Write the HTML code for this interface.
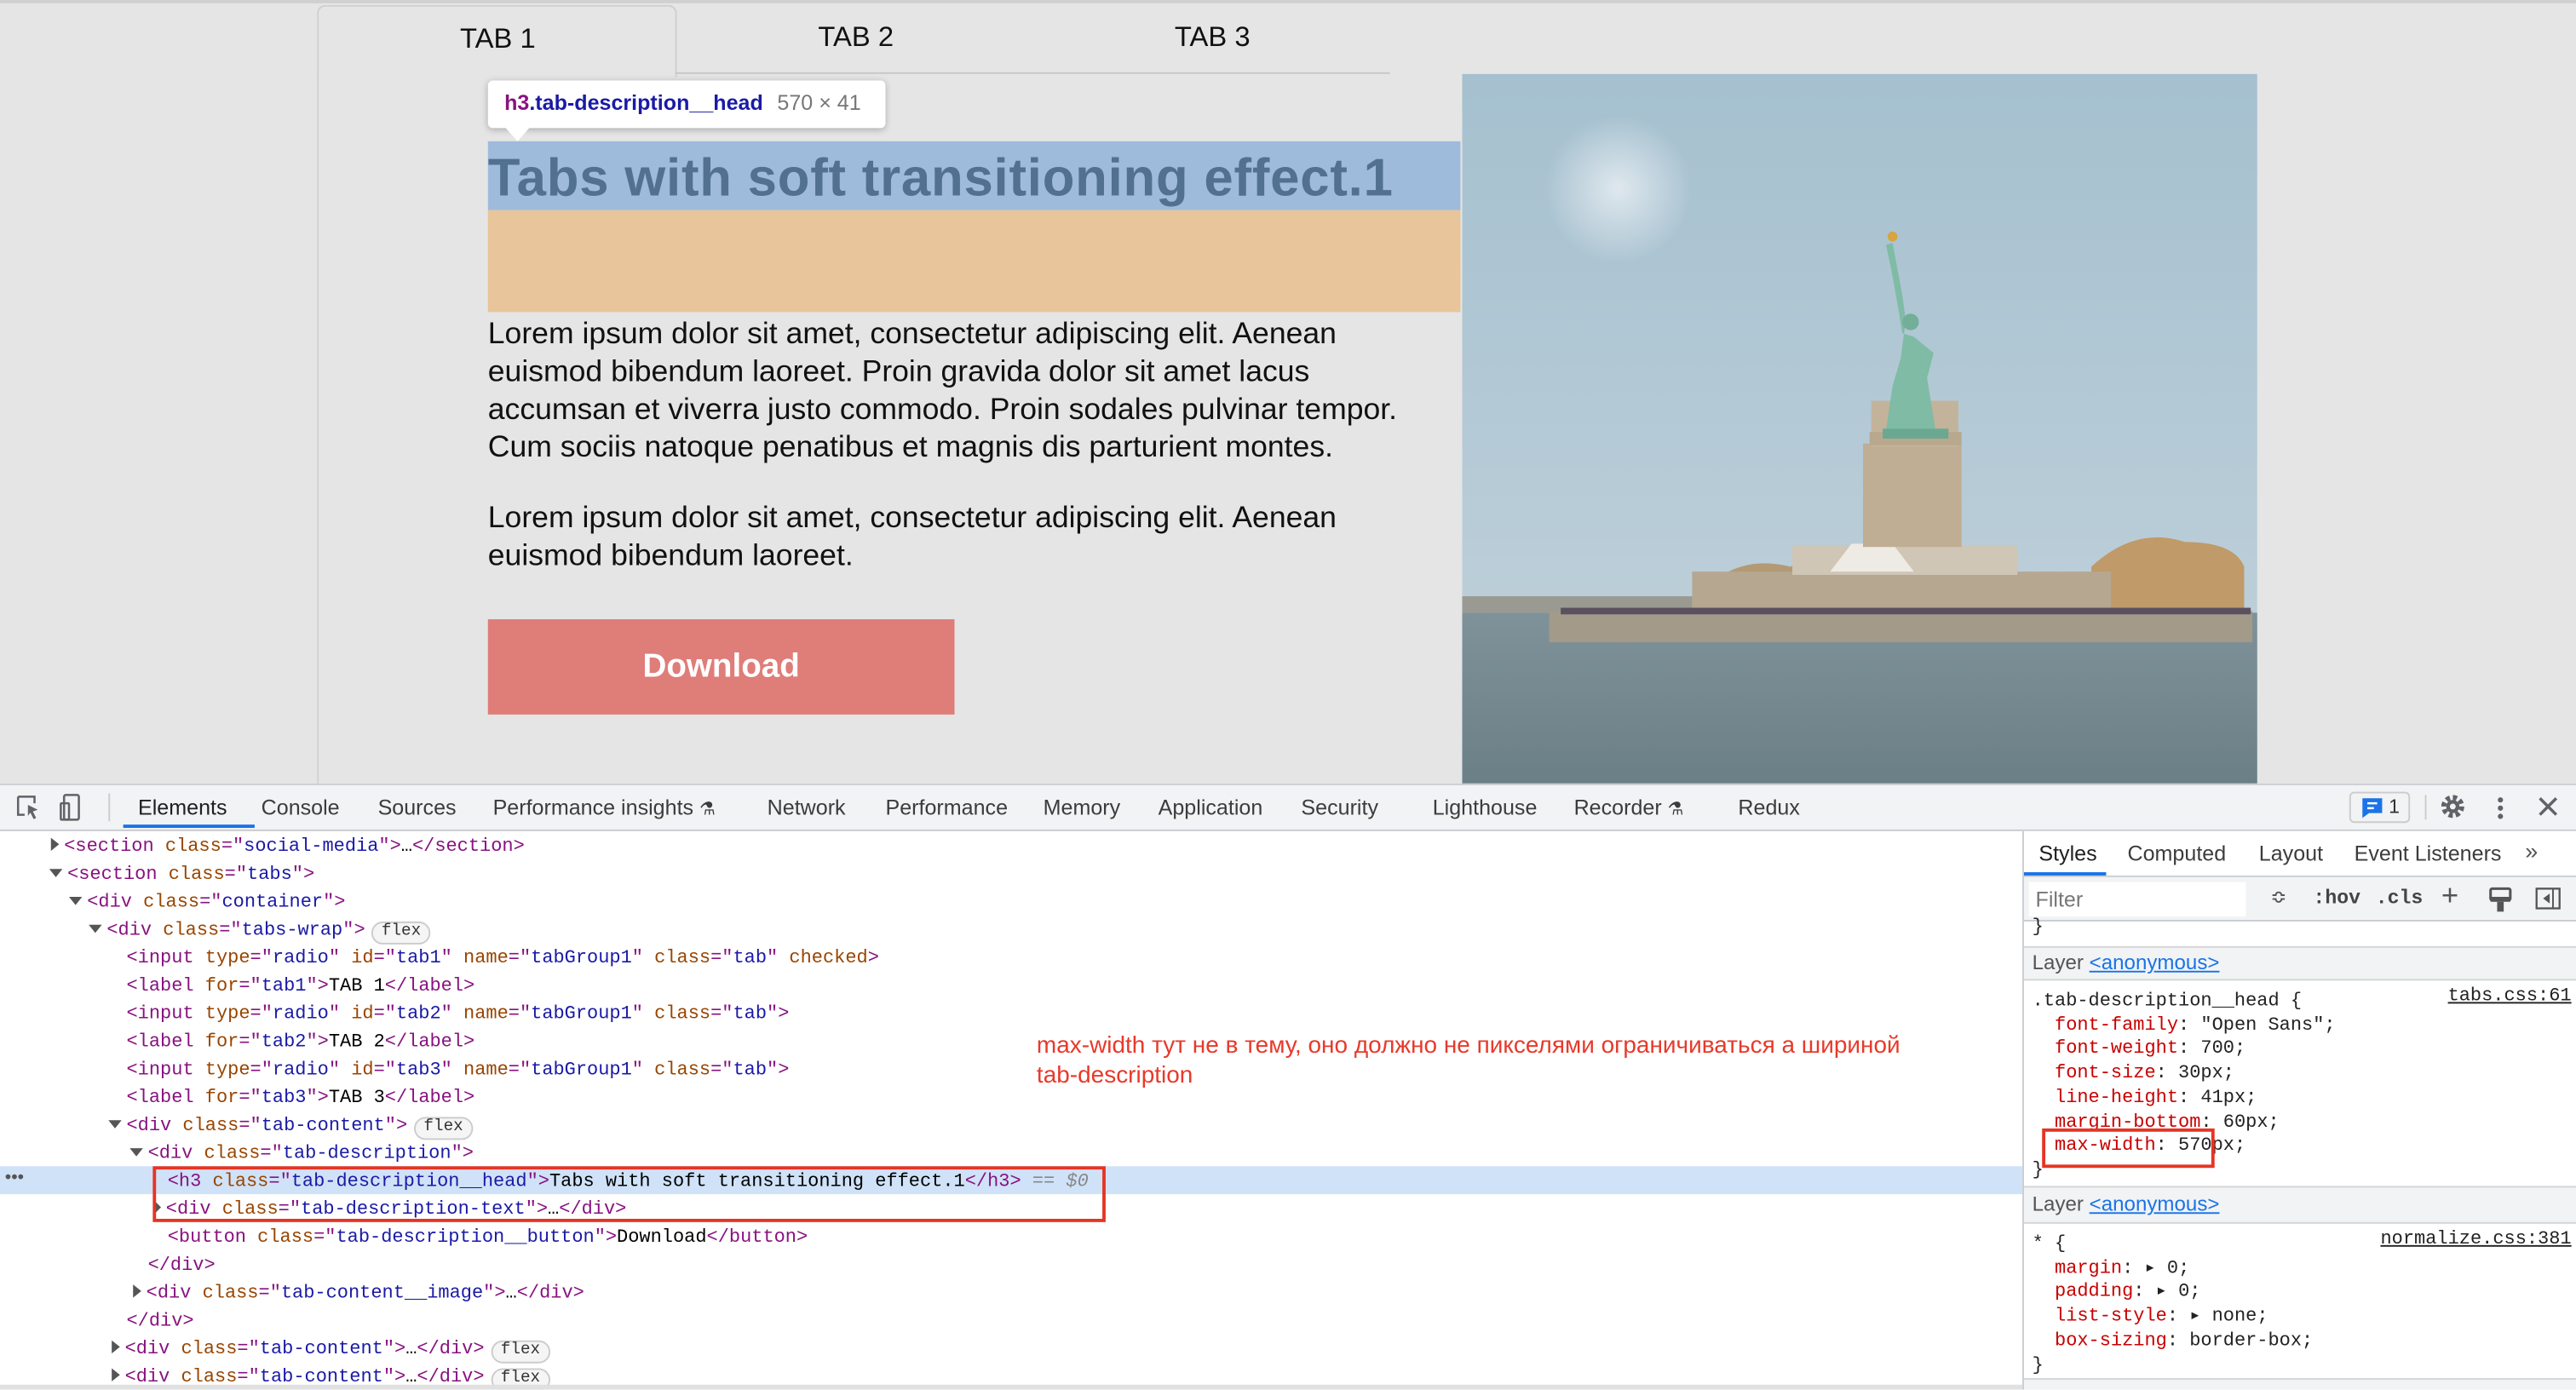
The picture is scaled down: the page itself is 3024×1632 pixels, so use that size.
<!DOCTYPE html>
<html><head><meta charset="utf-8"><style>
*{margin:0;padding:0;box-sizing:border-box}
html,body{width:3024px;height:1632px;overflow:hidden;background:#fff}
#s{position:absolute;left:0;top:0;width:1568px;height:846px;transform:scale(1.92857);transform-origin:0 0;font-family:"Liberation Sans",Arial,sans-serif;overflow:hidden}
.a{position:absolute;white-space:nowrap}
.m{font-family:"Liberation Mono",monospace;font-size:11.4px;line-height:17px}
.tg{color:#881280}.an{color:#994500}.av{color:#1a1aa6}.tx{color:#222}
.tri{display:inline-block;width:0;height:0;border-left:5px solid #555;border-top:4px solid transparent;border-bottom:4px solid transparent;margin-right:3px}
.trd{display:inline-block;width:0;height:0;border-top:5px solid #555;border-left:4px solid transparent;border-right:4px solid transparent;margin-right:3px;vertical-align:1px}
.fl{display:inline-block;border:1px solid #ccc;border-radius:8px;padding:0 5px;font-size:10px;line-height:12px;color:#333;background:#f5f5f5;margin-left:4px;font-family:"Liberation Mono",monospace}
.dt{font-size:13px;color:#3c3c3c;top:484px}
.sp{font-family:"Liberation Mono",monospace;font-size:11.4px;line-height:14.7px}
.pn{color:#c80000}
</style></head><body><div id="s">
<div class="a" style="left:0;top:0;width:1568px;height:477px;background:#e5e5e5"></div>
<div class="a" style="left:0;top:0;width:1568px;height:2px;background:#d0d0d0"></div>
<div class="a" style="left:193px;top:3px;width:219px;height:44px;border:1px solid #cfcfcf;border-bottom:none;border-radius:5px 5px 0 0;background:#e5e5e5"></div>
<div class="a" style="left:193px;top:45px;width:1px;height:432px;background:#d2d2d2"></div>
<div class="a" style="left:411px;top:44px;width:435px;height:1px;background:#c4c8cc"></div>
<div class="a" style="left:280px;top:14px;font-size:17px;color:#111">TAB 1</div>
<div class="a" style="left:498px;top:13px;font-size:17px;color:#111">TAB 2</div>
<div class="a" style="left:715px;top:13px;font-size:17px;color:#111">TAB 3</div>
<div class="a" style="left:297px;top:86px;width:592px;height:42px;background:#9fbbdc"></div>
<div class="a" style="left:297px;top:128px;width:592px;height:62px;background:#e8c59a"></div>
<div class="a" style="left:297px;top:87px;font-size:32px;font-weight:bold;color:#52708f;letter-spacing:0.4px;line-height:42px">Tabs with soft transitioning effect.1</div>
<div class="a" style="left:297px;top:49px;width:242px;height:29px;background:#fff;border-radius:3px;box-shadow:0 1px 4px rgba(0,0,0,.25)"></div>
<div class="a" style="left:307px;top:77px;width:0;height:0;border-left:8px solid transparent;border-right:8px solid transparent;border-top:9px solid #fff"></div>
<div class="a" style="left:307px;top:55px;font-size:13px;font-weight:bold;color:#1a1aa6"><span style="color:#881280">h3</span>.tab-description__head <span style="font-weight:normal;color:#777;margin-left:5px">570 × 41</span></div>
<div class="a" style="left:297px;top:191px;font-size:18.45px;line-height:23px;color:#111">Lorem ipsum dolor sit amet, consectetur adipiscing elit. Aenean<br>euismod bibendum laoreet. Proin gravida dolor sit amet lacus<br>accumsan et viverra justo commodo. Proin sodales pulvinar tempor.<br>Cum sociis natoque penatibus et magnis dis parturient montes.</div>
<div class="a" style="left:297px;top:303px;font-size:18.45px;line-height:23px;color:#111">Lorem ipsum dolor sit amet, consectetur adipiscing elit. Aenean<br>euismod bibendum laoreet.</div>
<div class="a" style="left:297px;top:377px;width:284px;height:58px;background:#df7d79;color:#fff;font-size:20px;font-weight:bold;text-align:center;line-height:58px">Download</div>
<svg class="a" style="left:890px;top:45px" width="484" height="432" viewBox="0 0 484 432">
<defs><linearGradient id="sky" x1="0" y1="0" x2="0" y2="1"><stop offset="0" stop-color="#a5c0cf"/><stop offset="1" stop-color="#c3d3dc"/></linearGradient>
<linearGradient id="wa" x1="0" y1="0" x2="0" y2="1"><stop offset="0" stop-color="#7f929a"/><stop offset="1" stop-color="#6b7f87"/></linearGradient>
<radialGradient id="sun" cx="0.5" cy="0.5" r="0.5"><stop offset="0" stop-color="#dfe8ee"/><stop offset="1" stop-color="#dfe8ee" stop-opacity="0"/></radialGradient></defs>
<rect width="484" height="432" fill="url(#sky)"/>
<circle cx="95" cy="70" r="45" fill="url(#sun)"/>
<rect y="328" width="484" height="104" fill="url(#wa)"/>
<rect x="0" y="318" width="140" height="10" fill="#9a9a92"/>
<path d="M137 328 Q160 290 200 300 Q230 280 250 295 L250 328Z" fill="#b39a74"/>
<path d="M383 328 L383 300 Q410 275 440 285 Q470 285 476 300 L476 330Z" fill="#c09a68"/>
<rect x="140" y="303" width="255" height="25" fill="#b5a790"/>
<rect x="201" y="287" width="137" height="18" fill="#cfc6b5"/>
<path d="M224 303 L237 286 L262 286 L275 303Z" fill="#eeeae4"/>
<rect x="244" y="225" width="60" height="63" fill="#bfae93"/>
<rect x="249" y="199" width="53" height="28" fill="#c3b39a"/>
<rect x="248" y="218" width="56" height="8" fill="#b8a88e"/>
<path d="M267 173 Q265 180 262 190 L258 217 L270 217 L288 216 L283 185 L287 170 L275 160 L268 158 L265 140 L261 118 L258 104 L262 103 L268 135 L270 150Z" fill="#7fbba5"/>
<circle cx="273" cy="151" r="5" fill="#72ae98"/>
<circle cx="262" cy="99" r="3" fill="#d6a440"/>
<rect x="256" y="216" width="40" height="6" fill="#6aa891"/>
<rect x="53" y="327" width="428" height="19" fill="#a39a8a"/>
<rect x="60" y="325" width="420" height="4" fill="#5a5060"/>
</svg>
<div class="a" style="left:0;top:477px;width:1568px;height:29px;background:#f1f3f4;border-top:1px solid #cacdd1;border-bottom:1px solid #cacdd1"></div>
<svg class="a" style="left:9px;top:483px" width="48" height="18" viewBox="0 0 48 18" fill="none" stroke="#5f6368" stroke-width="1.3"><path d="M2 2h10v4M2 2v11h4"/><path d="M8 7l6 3-3 1 2 4-1.5.7-2-4-1.5 2z" fill="#5f6368" stroke="none"/><rect x="30" y="1" width="9" height="15" rx="1"/><rect x="28" y="6" width="5" height="10" rx="0.5"/></svg>
<div class="a" style="left:66px;top:483px;width:1px;height:17px;background:#ccc"></div>
<div class="a dt" style="left:84px;color:#1f1f1f">Elements</div>
<div class="a" style="left:75px;top:502px;width:80px;height:2px;background:#1a73e8"></div>
<div class="a dt" style="left:159px">Console</div>
<div class="a dt" style="left:230px">Sources</div>
<div class="a dt" style="left:300px">Performance insights <span style="font-size:11px">⚗</span></div>
<div class="a dt" style="left:467px">Network</div>
<div class="a dt" style="left:539px">Performance</div>
<div class="a dt" style="left:635px">Memory</div>
<div class="a dt" style="left:705px">Application</div>
<div class="a dt" style="left:792px">Security</div>
<div class="a dt" style="left:872px">Lighthouse</div>
<div class="a dt" style="left:958px">Recorder <span style="font-size:11px">⚗</span></div>
<div class="a dt" style="left:1058px">Redux</div>
<div class="a" style="left:1430px;top:482px;width:37px;height:19px;border:1px solid #ccc;border-radius:3px;background:#f1f3f4"></div>
<svg class="a" style="left:1437px;top:485px" width="14" height="14" viewBox="0 0 14 14"><path d="M1 1h12v9H5l-4 3z" fill="#1a73e8"/><path d="M4 4h6M4 7h4" stroke="#fff" stroke-width="1.3"/></svg>
<div class="a" style="left:1454px;top:484px;font-size:12px;color:#333">1</div>
<div class="a" style="left:1476px;top:484px;width:1px;height:15px;background:#ccc"></div>
<svg class="a" style="left:1485px;top:483px" width="16" height="16" viewBox="0 0 16 16"><circle cx="8" cy="8" r="5.5" fill="none" stroke="#5f6368" stroke-width="3" stroke-dasharray="2.5 1.8"/><circle cx="8" cy="8" r="4" fill="#5f6368"/><circle cx="8" cy="8" r="1.8" fill="#f1f3f4"/></svg>
<svg class="a" style="left:1519px;top:484px" width="6" height="16"><circle cx="3" cy="3" r="1.6" fill="#5f6368"/><circle cx="3" cy="8" r="1.6" fill="#5f6368"/><circle cx="3" cy="13" r="1.6" fill="#5f6368"/></svg>
<svg class="a" style="left:1545px;top:485px" width="12" height="12"><path d="M1 1l10 10M11 1L1 11" stroke="#5f6368" stroke-width="1.8"/></svg>
<div class="a" style="left:0;top:710px;width:1231px;height:17px;background:#cfe2f8"></div>
<div class="a" style="left:3px;top:710px;font-size:11px;color:#555;line-height:15px">•••</div>
<div class="a m" style="left:0;top:508px;width:1231px">
<div style="padding-left:31px"><span class="tri"></span><span class="tg">&lt;section </span><span class="an">class</span><span class="tg">="</span><span class="av">social-media</span><span class="tg">"&gt;</span>…<span class="tg">&lt;/section&gt;</span></div>
<div style="padding-left:30px"><span class="trd"></span><span class="tg">&lt;section </span><span class="an">class</span><span class="tg">="</span><span class="av">tabs</span><span class="tg">"&gt;</span></div>
<div style="padding-left:42px"><span class="trd"></span><span class="tg">&lt;div </span><span class="an">class</span><span class="tg">="</span><span class="av">container</span><span class="tg">"&gt;</span></div>
<div style="padding-left:54px"><span class="trd"></span><span class="tg">&lt;div </span><span class="an">class</span><span class="tg">="</span><span class="av">tabs-wrap</span><span class="tg">"&gt;</span><span class="fl">flex</span></div>
<div style="padding-left:77px"><span class="tg">&lt;input </span><span class="an">type</span><span class="tg">="</span><span class="av">radio</span><span class="tg">" </span><span class="an">id</span><span class="tg">="</span><span class="av">tab1</span><span class="tg">" </span><span class="an">name</span><span class="tg">="</span><span class="av">tabGroup1</span><span class="tg">" </span><span class="an">class</span><span class="tg">="</span><span class="av">tab</span><span class="tg">" </span><span class="an">checked</span><span class="tg">&gt;</span></div>
<div style="padding-left:77px"><span class="tg">&lt;label </span><span class="an">for</span><span class="tg">="</span><span class="av">tab1</span><span class="tg">"&gt;</span>TAB 1<span class="tg">&lt;/label&gt;</span></div>
<div style="padding-left:77px"><span class="tg">&lt;input </span><span class="an">type</span><span class="tg">="</span><span class="av">radio</span><span class="tg">" </span><span class="an">id</span><span class="tg">="</span><span class="av">tab2</span><span class="tg">" </span><span class="an">name</span><span class="tg">="</span><span class="av">tabGroup1</span><span class="tg">" </span><span class="an">class</span><span class="tg">="</span><span class="av">tab</span><span class="tg">"&gt;</span></div>
<div style="padding-left:77px"><span class="tg">&lt;label </span><span class="an">for</span><span class="tg">="</span><span class="av">tab2</span><span class="tg">"&gt;</span>TAB 2<span class="tg">&lt;/label&gt;</span></div>
<div style="padding-left:77px"><span class="tg">&lt;input </span><span class="an">type</span><span class="tg">="</span><span class="av">radio</span><span class="tg">" </span><span class="an">id</span><span class="tg">="</span><span class="av">tab3</span><span class="tg">" </span><span class="an">name</span><span class="tg">="</span><span class="av">tabGroup1</span><span class="tg">" </span><span class="an">class</span><span class="tg">="</span><span class="av">tab</span><span class="tg">"&gt;</span></div>
<div style="padding-left:77px"><span class="tg">&lt;label </span><span class="an">for</span><span class="tg">="</span><span class="av">tab3</span><span class="tg">"&gt;</span>TAB 3<span class="tg">&lt;/label&gt;</span></div>
<div style="padding-left:66px"><span class="trd"></span><span class="tg">&lt;div </span><span class="an">class</span><span class="tg">="</span><span class="av">tab-content</span><span class="tg">"&gt;</span><span class="fl">flex</span></div>
<div style="padding-left:79px"><span class="trd"></span><span class="tg">&lt;div </span><span class="an">class</span><span class="tg">="</span><span class="av">tab-description</span><span class="tg">"&gt;</span></div>
<div style="padding-left:102px"><span class="tg">&lt;h3 </span><span class="an">class</span><span class="tg">="</span><span class="av">tab-description__head</span><span class="tg">"&gt;</span>Tabs with soft transitioning effect.1<span class="tg">&lt;/h3&gt;</span><span style="color:#888"> == <i>$0</i></span></div>
<div style="padding-left:94px"><span class="tri" style="border-left-width:4px"></span><span class="tg">&lt;div </span><span class="an">class</span><span class="tg">="</span><span class="av">tab-description-text</span><span class="tg">"&gt;</span>…<span class="tg">&lt;/div&gt;</span></div>
<div style="padding-left:102px"><span class="tg">&lt;button </span><span class="an">class</span><span class="tg">="</span><span class="av">tab-description__button</span><span class="tg">"&gt;</span>Download<span class="tg">&lt;/button&gt;</span></div>
<div style="padding-left:90px"><span class="tg">&lt;/div&gt;</span></div>
<div style="padding-left:81px"><span class="tri"></span><span class="tg">&lt;div </span><span class="an">class</span><span class="tg">="</span><span class="av">tab-content__image</span><span class="tg">"&gt;</span>…<span class="tg">&lt;/div&gt;</span></div>
<div style="padding-left:77px"><span class="tg">&lt;/div&gt;</span></div>
<div style="padding-left:68px"><span class="tri"></span><span class="tg">&lt;div </span><span class="an">class</span><span class="tg">="</span><span class="av">tab-content</span><span class="tg">"&gt;</span>…<span class="tg">&lt;/div&gt;</span><span class="fl">flex</span></div>
<div style="padding-left:68px"><span class="tri"></span><span class="tg">&lt;div </span><span class="an">class</span><span class="tg">="</span><span class="av">tab-content</span><span class="tg">"&gt;</span>…<span class="tg">&lt;/div&gt;</span><span class="fl">flex</span></div>
</div>
<div class="a" style="left:93px;top:710px;width:580px;height:34px;border:2px solid #e53523"></div>
<div class="a" style="left:631px;top:628px;font-size:14.5px;line-height:18px;color:#e8392a">max-width тут не в тему, оно должно не пикселями ограничиваться а шириной<br>tab-description</div>
<div class="a" style="left:0;top:843px;width:1568px;height:3px;background:#e0e0e0"></div>
<div class="a" style="left:1231px;top:506px;width:337px;height:340px;background:#fff;border-left:1px solid #cacdd1"></div>
<div class="a" style="left:1232px;top:506px;width:336px;height:28px;border-bottom:1px solid #cacdd1;background:#fff"></div>
<div class="a" style="left:1241px;top:512px;font-size:13px;color:#1f1f1f">Styles</div>
<div class="a" style="left:1295px;top:512px;font-size:13px;color:#3c3c3c">Computed</div>
<div class="a" style="left:1375px;top:512px;font-size:13px;color:#3c3c3c">Layout</div>
<div class="a" style="left:1433px;top:512px;font-size:13px;color:#3c3c3c">Event Listeners</div>
<div class="a" style="left:1537px;top:510px;font-size:14px;color:#555">»</div>
<div class="a" style="left:1232px;top:531px;width:50px;height:2px;background:#1a73e8"></div>
<div class="a" style="left:1232px;top:534px;width:336px;height:27px;background:#f1f3f4;border-bottom:1px solid #cacdd1"></div>
<div class="a" style="left:1235px;top:537px;width:132px;height:21px;background:#fff"></div>
<div class="a" style="left:1239px;top:540px;font-size:13px;color:#777">Filter</div>
<div class="a" style="left:1382px;top:539px;font-size:12px;color:#555">≎</div>
<div class="a" style="left:1408px;top:540px;font-family:'Liberation Mono',monospace;font-size:12px;font-weight:bold;color:#444">:hov</div>
<div class="a" style="left:1446px;top:540px;font-family:'Liberation Mono',monospace;font-size:12px;font-weight:bold;color:#444">.cls</div>
<div class="a" style="left:1486px;top:535px;font-size:18px;color:#555">+</div>
<svg class="a" style="left:1515px;top:540px" width="14" height="16"><rect x="1" y="1" width="12" height="7" rx="1" fill="none" stroke="#555" stroke-width="1.6"/><rect x="1" y="6" width="12" height="3" fill="#555"/><rect x="5" y="9" width="4" height="6" fill="#555"/></svg>
<svg class="a" style="left:1543px;top:540px" width="16" height="14"><rect x="1" y="1" width="14" height="12" fill="none" stroke="#555" stroke-width="1.2"/><path d="M11 1v12" stroke="#555"/><path d="M9 4v6l-4-3z" fill="#555"/></svg>
<div class="a sp" style="left:1237px;top:558px;color:#222">}</div>
<div class="a" style="left:1232px;top:576px;width:336px;height:21px;background:#f1f3f4;border-top:1px solid #d5d5d5;border-bottom:1px solid #d5d5d5"></div>
<div class="a" style="left:1237px;top:579px;font-size:12.5px;color:#555">Layer <span style="color:#1a73e8;text-decoration:underline">&lt;anonymous&gt;</span></div>
<div class="a sp" style="left:1237px;top:603px;color:#222">.tab-description__head {<br>
&nbsp;&nbsp;<span class="pn">font-family</span>: "Open Sans";<br>
&nbsp;&nbsp;<span class="pn">font-weight</span>: 700;<br>
&nbsp;&nbsp;<span class="pn">font-size</span>: 30px;<br>
&nbsp;&nbsp;<span class="pn">line-height</span>: 41px;<br>
&nbsp;&nbsp;<span class="pn">margin-bottom</span>: 60px;<br>
&nbsp;&nbsp;<span class="pn">max-width</span>: 570px;<br>}</div>
<div class="a sp" style="left:1490px;top:600px;color:#222;text-decoration:underline">tabs.css:61</div>
<div class="a" style="left:1243px;top:687px;width:105px;height:24px;border:2px solid #e53523"></div>
<div class="a" style="left:1232px;top:722px;width:336px;height:23px;background:#f1f3f4;border-top:1px solid #d5d5d5;border-bottom:1px solid #d5d5d5"></div>
<div class="a" style="left:1237px;top:726px;font-size:12.5px;color:#555">Layer <span style="color:#1a73e8;text-decoration:underline">&lt;anonymous&gt;</span></div>
<div class="a sp" style="left:1237px;top:751px;color:#222">* {<br>
&nbsp;&nbsp;<span class="pn">margin</span>: ▸ 0;<br>
&nbsp;&nbsp;<span class="pn">padding</span>: ▸ 0;<br>
&nbsp;&nbsp;<span class="pn">list-style</span>: ▸ none;<br>
&nbsp;&nbsp;<span class="pn">box-sizing</span>: border-box;<br>}</div>
<div class="a sp" style="left:1449px;top:748px;color:#222;text-decoration:underline">normalize.css:381</div>
<div class="a" style="left:1232px;top:839px;width:336px;height:7px;background:#f1f3f4;border-top:1px solid #d5d5d5"></div>
</div></body></html>
